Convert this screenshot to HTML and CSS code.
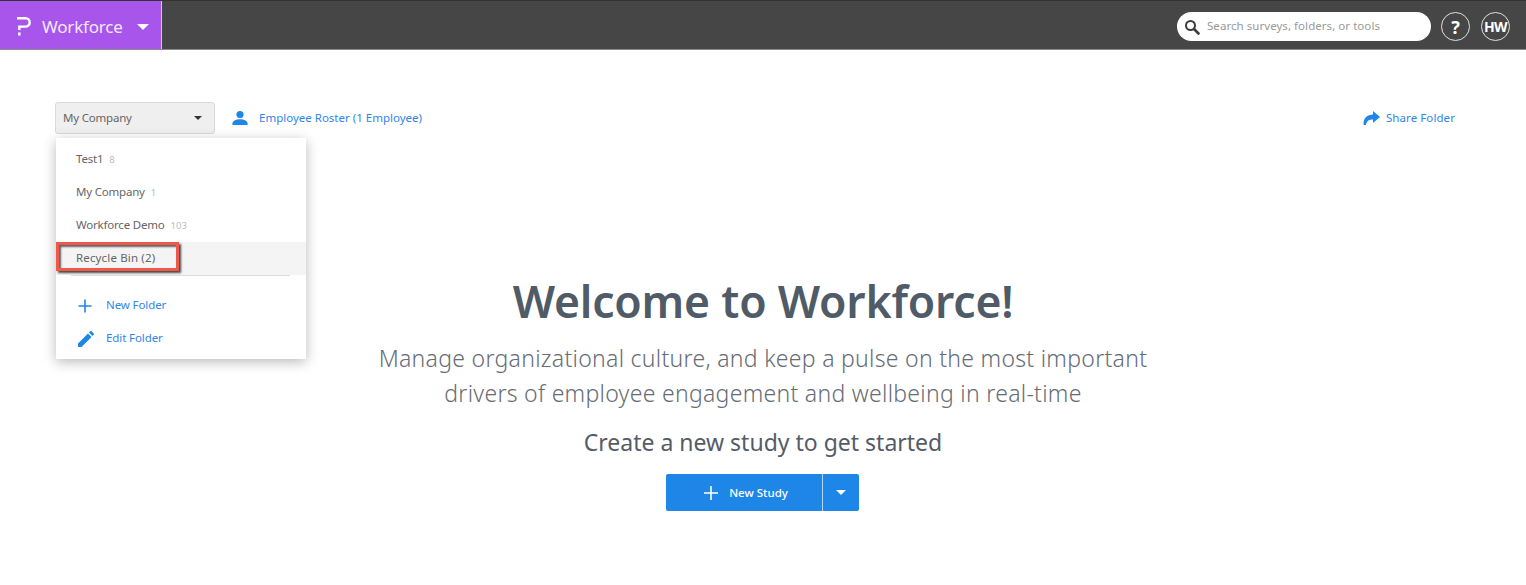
FILE: index.html
```html
<!DOCTYPE html>
<html lang="en">
<head>
<meta charset="utf-8">
<title>Workforce</title>
<link rel="stylesheet" href="styles.css">
</head>
<body>
<header class="topbar">
  <div class="brand">
    <svg class="brand-logo" width="14" height="19" viewBox="0 0 14 19"><path d="M0 1.200h8.500a4.200 4.200 0 0 1 0 8.400H2.300V13" fill="none" stroke="#fff" stroke-width="2.400"/><rect x="1" y="15.500" width="2.600" height="3" fill="#fff"/></svg>
    <span class="brand-name">Workforce</span>
    <span class="caret caret-brand"></span>
  </div>
  <div class="top-actions">
    <div class="search">
      <svg width="16" height="16" viewBox="0 0 16 16"><circle cx="6.500" cy="6.500" r="4.500" fill="none" stroke="#3c3c3c" stroke-width="2"/><path d="M10 10l4.500 4.500" stroke="#3c3c3c" stroke-width="2.600" stroke-linecap="round"/></svg>
      <span class="search-text">Search surveys, folders, or tools</span>
    </div>
    <div class="round-btn round-help">?</div>
    <div class="round-btn round-user">HW</div>
  </div>
</header>

<main class="page">
  <div class="toolbar">
    <div class="select">
      <span class="nudge">My Company</span>
      <span class="caret caret-select"></span>
    </div>
    <a class="link roster">
      <svg width="16" height="16" viewBox="0 0 16 16"><circle cx="8" cy="4.500" r="3.600" fill="#1e86e6"/><path d="M0.500 15v-1.800c0-2.800 4.500-4 7.500-4s7.500 1.200 7.500 4V15z" fill="#1e86e6"/></svg>
      <span class="nudge">Employee Roster (1 Employee)</span>
    </a>
    <a class="link share">
      <svg width="17" height="14" viewBox="0 0 17 14"><path d="M10 0l7 6-7 6V8.500c-3.800 0-6 1-7.200 5.500H.7C-.3 8 3.800 3.500 10 3.500z" fill="#1e86e6"/></svg>
      <span class="nudge">Share Folder</span>
    </a>
  </div>

  <section class="hero">
    <h1>Welcome to Workforce!</h1>
    <p class="lead">Manage organizational culture, and keep a pulse on the most important<br>drivers of employee engagement and wellbeing in real-time</p>
    <h2>Create a new study to get started</h2>
    <div class="split-btn">
      <div class="split-main">
        <svg width="14" height="14" viewBox="0 0 14 14"><path d="M7 0v14M0 7h14" stroke="#fff" stroke-width="1.600"/></svg>
        <span>New Study</span>
      </div>
      <div class="split-side"><span class="caret caret-btn"></span></div>
    </div>
  </section>

  <div class="menu">
    <ul class="folders">
      <li class="folder"><span class="nudge">Test1</span><small>8</small></li>
      <li class="folder"><span class="nudge">My Company</span><small>1</small></li>
      <li class="folder"><span class="nudge">Workforce Demo</span><small>103</small></li>
      <li class="folder folder-active"><span class="nudge">Recycle Bin (2)</span></li>
    </ul>
    <div class="menu-rule"></div>
    <a class="menu-link">
      <span class="menu-icon"><svg width="14" height="14" viewBox="0 0 14 14"><path d="M7 0.500v13M0.500 7h13" stroke="#1e86e6" stroke-width="1.600"/></svg></span>
      <span class="nudge">New Folder</span>
    </a>
    <a class="menu-link">
      <span class="menu-icon"><svg width="16" height="16" viewBox="0 0 16 16"><path d="M0 16v-3.500L10 2.500l3.500 3.500L3.500 16zM11 1.500L12.200.3c.4-.4 1-.4 1.400 0l2.100 2.100c.4.400.4 1 0 1.400L14.500 5z" fill="#1e86e6"/></svg></span>
      <span class="nudge">Edit Folder</span>
    </a>
  </div>
  <div class="annotation"></div>
</main>
</body>
</html>
```

FILE: styles.css
```css
* { box-sizing: border-box; }
html, body { margin: 0; height: 585px; overflow: hidden; }
body {
  background: #fff;
  font-family: "Noto Sans", "Open Sans", sans-serif;
  color: #555;
}
a { color: #2f86e8; text-decoration: none; }
.nudge { padding-bottom: 2px; }

.topbar {
  height: 50px;
  background: #464646;
  border-top: 1px solid #333;
  border-bottom: 1px solid #8a8a8a;
  display: flex;
  align-items: stretch;
  justify-content: space-between;
}
.brand {
  width: 162px;
  background: #a855ec;
  border-right: 1px solid #d8c8e8;
  display: flex;
  align-items: center;
  padding: 3px 0 0 17px;
  color: #fff;
}
.brand-logo { margin-right: 11px; }
.brand-name { font-size: 17px; letter-spacing: -0.2px; color: #f3e8fd; }
.caret {
  width: 0;
  height: 0;
  border-left: 6px solid transparent;
  border-right: 6px solid transparent;
  border-top: 6px solid #fff;
}
.caret-brand { margin-left: 14px; }
.top-actions {
  display: flex;
  align-items: center;
  padding: 3px 16px 0 0;
}
.search {
  width: 254px;
  height: 29px;
  background: #fff;
  border-radius: 15px;
  display: flex;
  align-items: center;
  padding-left: 7px;
  gap: 7px;
  margin-right: 10px;
}
.search-text {
  font-size: 11.500px;
  color: #9a9a9a;
  letter-spacing: 0.05px;
  padding-bottom: 2px;
  white-space: nowrap;
}
.round-btn {
  width: 29px;
  height: 29px;
  border: 1px solid #e0e0e0;
  border-radius: 50%;
  color: #fff;
  font-weight: 700;
  display: flex;
  align-items: center;
  justify-content: center;
}
.round-help { font-size: 18px; margin-right: 11px; }
.round-user { font-size: 14px; letter-spacing: -0.6px; }

.page { position: relative; height: 535px; }
.toolbar {
  display: flex;
  align-items: center;
  padding: 52px 71px 0 55px;
}
.select {
  width: 160px;
  height: 32px;
  background: #efefef;
  border: 1px solid #d9d9d9;
  border-radius: 3px;
  display: flex;
  align-items: center;
  justify-content: space-between;
  padding: 0 12px 0 7px;
  font-size: 11.500px;
  color: #666;
  letter-spacing: -0.2px;
}
.caret-select {
  border-left-width: 4px;
  border-right-width: 4px;
  border-top: 4px solid #333;
}
.link {
  display: flex;
  align-items: center;
  font-size: 11.500px;
  white-space: nowrap;
}
.roster { margin-left: 17px; gap: 11px; }
.share { margin-left: auto; gap: 6px; letter-spacing: 0.08px; }

.hero {
  text-align: center;
  padding-top: 138px;
}
.hero h1 {
  margin: 0;
  font-size: 44.500px;
  line-height: 58px;
  font-weight: 600;
  color: #505b68;
  letter-spacing: -0.2px;
}
.lead {
  margin: 11px 0 0;
  font-size: 23px;
  line-height: 35px;
  font-weight: 300;
  color: #666c74;
  letter-spacing: 0.29px;
}
.hero h2 {
  margin: 16px 0 0;
  font-size: 23px;
  line-height: 30px;
  font-weight: 400;
  color: #555c66;
}
.split-btn {
  display: inline-flex;
  margin: 17px 1px 0 0;
  height: 37px;
  border-radius: 2px;
  overflow: hidden;
  background: #1e86e6;
  color: #fff;
  vertical-align: top;
}
.split-main {
  width: 157px;
  display: flex;
  align-items: center;
  justify-content: center;
  gap: 11px;
  padding-left: 4px;
  font-size: 11.500px;
  font-weight: 500;
  border-right: 1px solid #b5d8f6;
}
.split-side {
  width: 36px;
  display: flex;
  align-items: center;
  justify-content: center;
}
.caret-btn {
  border-left-width: 5px;
  border-right-width: 5px;
  border-top-width: 5px;
}

.menu {
  position: absolute;
  left: 56px;
  top: 88px;
  width: 250px;
  height: 221px;
  background: #fff;
  box-shadow: 0 3px 12px rgba(0, 0, 0, 0.28);
  padding-top: 5px;
}
.folders { list-style: none; margin: 0; padding: 0; }
.folder {
  height: 33px;
  display: flex;
  align-items: center;
  padding-left: 20px;
  gap: 6px;
  font-size: 11.500px;
  color: #666;
  letter-spacing: -0.2px;
}
.folder small { font-size: 9.500px; color: #bbb; letter-spacing: 0; }
.folder-active { background: #f4f4f4; letter-spacing: 0.15px; }
.menu-rule {
  height: 1px;
  background: #ddd;
  margin: 0 16px 0 15px;
}
.menu-link {
  display: flex;
  align-items: center;
  height: 33px;
  font-size: 11.500px;
  letter-spacing: -0.1px;
}
.menu-link:nth-of-type(1) { margin-top: 13px; }
.menu-icon {
  width: 50px;
  padding-left: 22px;
  display: flex;
  align-items: center;
}
.annotation {
  position: absolute;
  left: 56px;
  top: 192px;
  width: 123px;
  height: 29px;
  border: 3px solid #f0584a;
  box-shadow: 2px 2px 2px rgba(0, 0, 0, 0.7), inset 2px 2px 2px rgba(0, 0, 0, 0.6);
}
```
